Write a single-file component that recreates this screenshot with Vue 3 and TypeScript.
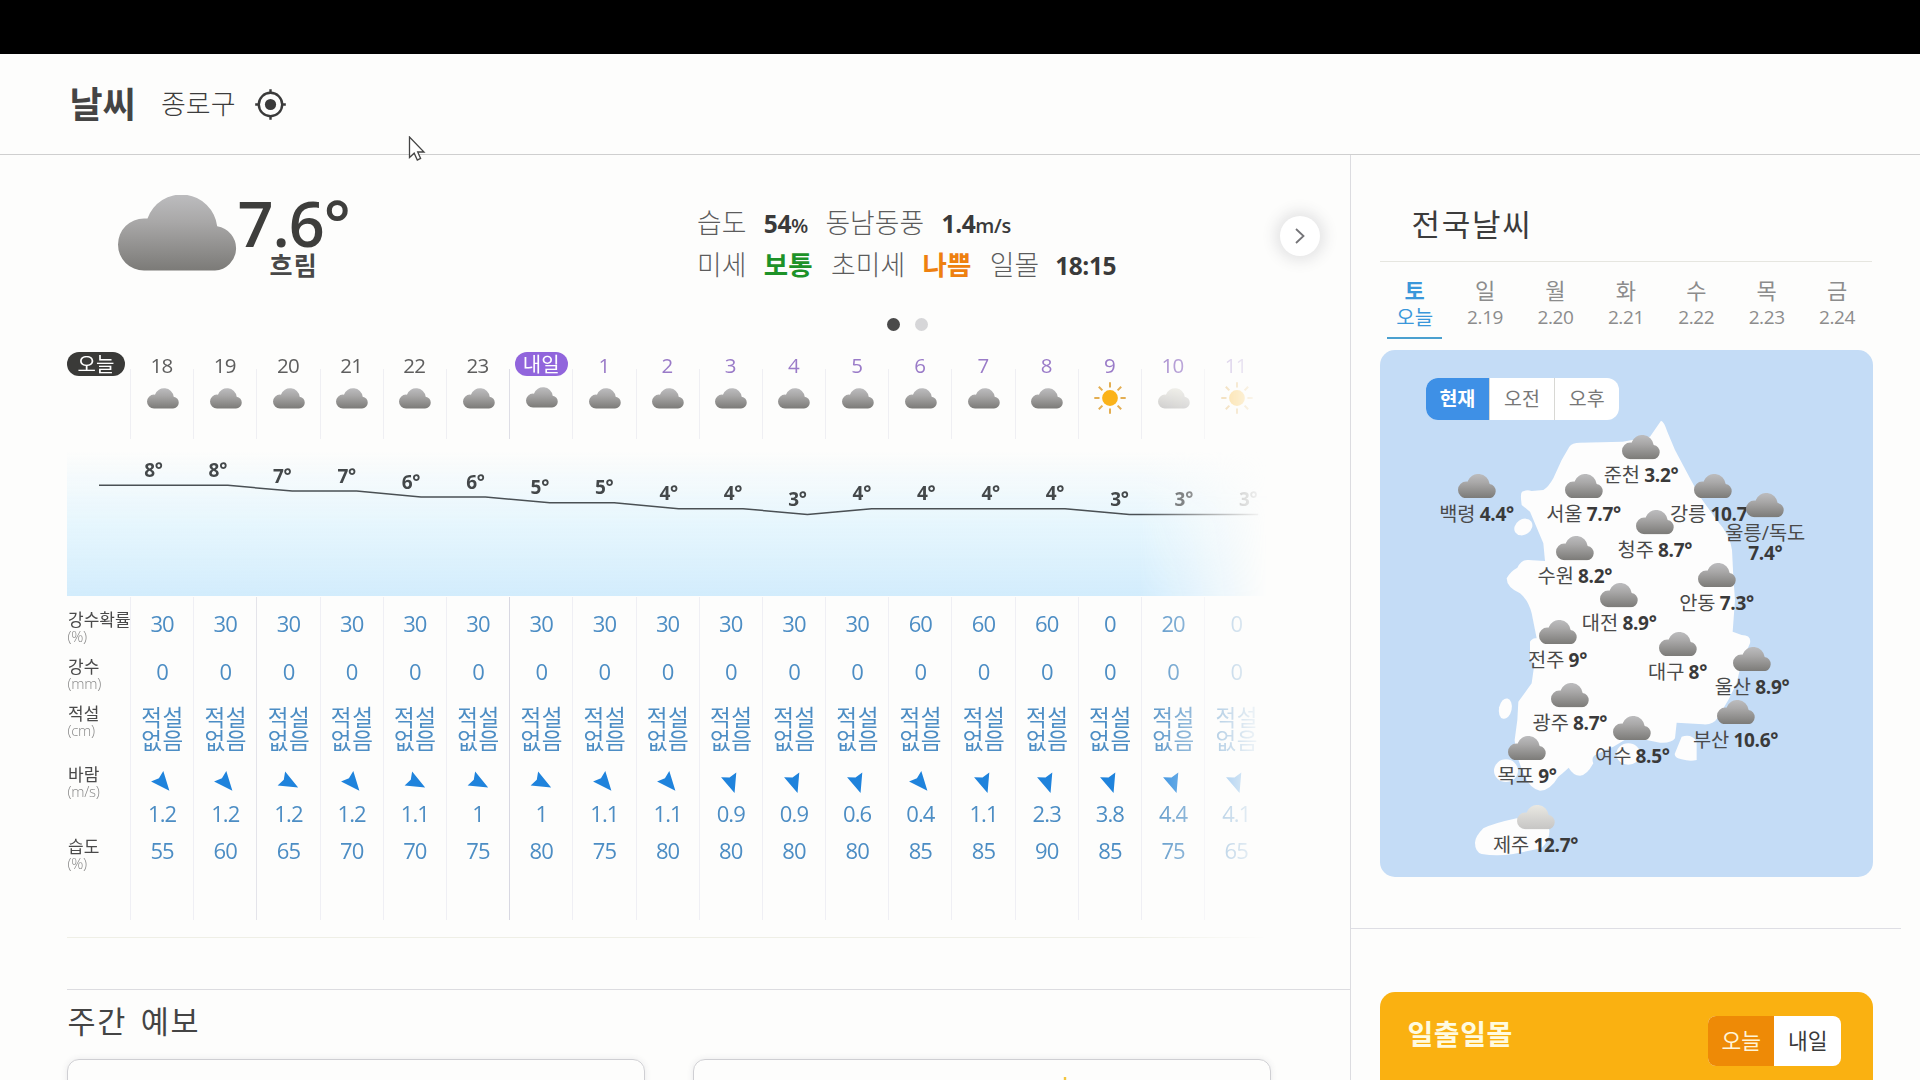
<script setup lang="ts">
interface Hour {
  label: string
  tomorrow: boolean
  icon: 'cloud' | 'sun' | 'pale'
  temp: number
  pop: number
  dir: number
  wind: string
  humidity: number
}

const labels = ['18', '19', '20', '21', '22', '23', '내일', '1', '2', '3', '4', '5', '6', '7', '8', '9', '10', '11']
const temps = [8, 8, 7, 7, 6, 6, 5, 5, 4, 4, 3, 4, 4, 4, 4, 3, 3, 3]
const pops = [30, 30, 30, 30, 30, 30, 30, 30, 30, 30, 30, 30, 60, 60, 60, 0, 20, 0]
const dirs = [40, 40, 62, 40, 62, 62, 62, 40, 40, 18, 18, 18, 40, 18, 18, 18, 18, 18]
const winds = ['1.2', '1.2', '1.2', '1.2', '1.1', '1', '1', '1.1', '1.1', '0.9', '0.9', '0.6', '0.4', '1.1', '2.3', '3.8', '4.4', '4.1']
const humidities = [55, 60, 65, 70, 70, 75, 80, 75, 80, 80, 80, 80, 85, 85, 90, 85, 75, 65]

const hours: Hour[] = labels.map((label, i) => ({
  label,
  tomorrow: i > 6,
  icon: i === 15 || i === 17 ? 'sun' : i === 16 ? 'pale' : 'cloud',
  temp: temps[i],
  pop: pops[i],
  dir: dirs[i],
  wind: winds[i],
  humidity: humidities[i],
}))

const step = 64.4
const tempY = (t: number): number => 35.3 + (8 - t) * 5.85
const points = [{ x: 32, y: tempY(8) }, ...temps.map((t, i) => ({ x: 96.4 + i * step, y: tempY(t) }))]
const line = points.map((p, i) => `${i ? 'L' : 'M'}${p.x.toFixed(1)} ${p.y.toFixed(1)}`).join(' ')

const rowLabels = [
  { name: '강수확률', unit: '(%)', height: 48, pad: 11 },
  { name: '강수', unit: '(mm)', height: 48, pad: 10.5 },
  { name: '적설', unit: '(cm)', height: 66, pad: 9 },
  { name: '바람', unit: '(m/s)', height: 63, pad: 4 },
  { name: '습도', unit: '(%)', height: 53, pad: 13 },
]

const days = [
  { day: '토', date: '오늘' },
  { day: '일', date: '2.19' },
  { day: '월', date: '2.20' },
  { day: '화', date: '2.21' },
  { day: '수', date: '2.22' },
  { day: '목', date: '2.23' },
  { day: '금', date: '2.24' },
]

const cities = [
  { name: '백령', temp: '4.4°', x: 97, y: 86 },
  { name: '서울', temp: '7.7°', x: 204, y: 86 },
  { name: '준천', temp: '3.2°', x: 261.5, y: 47.5 },
  { name: '수원', temp: '8.2°', x: 195.3, y: 148.5 },
  { name: '청주', temp: '8.7°', x: 275.3, y: 122.5 },
  { name: '강릉', temp: '10.7°', x: 333, y: 86 },
  { name: '울릉/독도', temp: '7.4°', x: 385.8, y: 105.7 },
  { name: '안동', temp: '7.3°', x: 337, y: 175 },
  { name: '대전', temp: '8.9°', x: 239.7, y: 195.7 },
  { name: '전주', temp: '9°', x: 178, y: 232.3 },
  { name: '대구', temp: '8°', x: 298, y: 244 },
  { name: '울산', temp: '8.9°', x: 372.5, y: 259 },
  { name: '광주', temp: '8.7°', x: 190.3, y: 295.5 },
  { name: '여수', temp: '8.5°', x: 252.8, y: 328.3 },
  { name: '부산', temp: '10.6°', x: 356, y: 312 },
  { name: '목포', temp: '9°', x: 147.6, y: 348.3 },
  { name: '제주', temp: '12.7°', x: 156, y: 417.7, pale: true },
]
</script>

<template>
  <div class="page">
    <svg class="defs" width="0" height="0">
      <defs>
        <linearGradient id="cloudFill" x1="0" y1="0" x2="0" y2="76" gradientUnits="userSpaceOnUse">
          <stop offset="0" stop-color="#bcbcbe" />
          <stop offset="0.35" stop-color="#a9a8a8" />
          <stop offset="1" stop-color="#7b7a77" />
        </linearGradient>
        <linearGradient id="paleFill" x1="0" y1="0" x2="0" y2="76" gradientUnits="userSpaceOnUse">
          <stop offset="0" stop-color="#e9e8e2" />
          <stop offset="1" stop-color="#c6c5c4" />
        </linearGradient>
        <path id="cloudShape" d="M26 75.5A26 26 0 0 1 26 23.5L29.5 23.6A36 36 0 0 1 99.2 31.2A22.3 22.3 0 0 1 97 75.5Z" />
        <symbol id="cloud" viewBox="0 0 119 76"><use href="#cloudShape" fill="url(#cloudFill)" /></symbol>
        <symbol id="pale" viewBox="0 0 119 76"><use href="#cloudShape" fill="url(#paleFill)" /></symbol>
        <symbol id="sun" viewBox="-16 -16 32 32">
          <circle r="7.9" fill="#fbb31a" />
          <path
            d="M0-15.7V-10.5M0 15.7V10.5M-15.7 0H-10.5M15.7 0H10.5M-11.2-11.2L-7.6-7.6M11.2 11.2L7.6 7.6M-11.2 11.2L-7.6 7.6M11.2-11.2L7.6-7.6"
            stroke="#e3ae52"
            stroke-width="2"
            fill="none"
          />
        </symbol>
      </defs>
    </svg>

    <div class="topbar"></div>
    <header class="header">
      <h1>날씨</h1>
      <span class="place">종로구</span>
      <svg class="locate" viewBox="-15.5 -15.5 31 31" fill="none" stroke="#3a3a3a" stroke-width="2.4">
        <circle r="11.7" />
        <circle r="5.6" fill="#3a3a3a" stroke="none" />
        <path d="M0-15.3V-11M0 15.3V11M-15.3 0H-11M15.3 0H11" />
      </svg>
    </header>

    <div class="body">
      <main class="main">
        <section class="current">
          <div class="now">
            <svg class="bigcloud"><use href="#cloud" /></svg>
            <div class="nowtext">
              <div class="degree">7.6°</div>
              <div class="state">흐림</div>
            </div>
          </div>
          <div class="info">
            <div class="inforow">
              <span>습도</span><b>54<small>%</small></b>
              <span>동남동풍</span><b>1.4<small>m/s</small></b>
            </div>
            <div class="inforow">
              <span>미세</span><b class="good">보통</b>
              <span>초미세</span><b class="bad">나쁨</b>
              <span class="last">일몰</span><b>18:15</b>
            </div>
          </div>
          <button class="next" aria-label="다음">
            <svg width="12" height="18" viewBox="0 0 12 18" fill="none" stroke="#747478" stroke-width="1.8"><path d="M2 2L9.5 9L2 16" /></svg>
          </button>
        </section>
        <div class="dots"><i class="on"></i><i></i></div>

        <section class="hourly">
          <div class="hours">
            <div class="first"><span class="pill dark">오늘</span></div>
            <div v-for="(h, i) in hours" :key="i" class="hour" :class="{ strong: i === 6 }">
              <div class="time" :class="{ violet: h.tomorrow }">
                <span v-if="i === 6" class="pill purple">내일</span>
                <template v-else>{{ h.label }}</template>
              </div>
              <svg class="wicon" :class="h.icon"><use :href="'#' + h.icon" /></svg>
            </div>
          </div>

          <svg class="chart" width="1206" height="147" viewBox="0 0 1206 147">
            <defs>
              <linearGradient id="sky" x1="0" y1="0" x2="0" y2="1">
                <stop offset="0" stop-color="#e4f5fe" stop-opacity="0" />
                <stop offset="0.5" stop-color="#e0f4fd" stop-opacity="0.8" />
                <stop offset="1" stop-color="#d2ecfc" />
              </linearGradient>
            </defs>
            <rect width="1206" height="146" fill="url(#sky)" />
            <path :d="line" fill="none" stroke="#4a5054" stroke-width="1.5" stroke-linejoin="round" />
            <text v-for="(h, i) in hours" :key="i" :x="77.2 + i * step" :y="tempY(h.temp) - 8.4">{{ h.temp }}°</text>
          </svg>

          <div class="table">
            <div class="names">
              <div v-for="(r, i) in rowLabels" :key="i" class="name" :style="{ height: r.height + 'px', paddingTop: r.pad + 'px' }">
                <div class="nm">{{ r.name }}</div>
                <div class="unit">{{ r.unit }}</div>
              </div>
            </div>
            <div v-for="(h, i) in hours" :key="i" class="col" :class="{ strong: i === 6, mid: i === 2 }">
              <div class="cell pop">{{ h.pop }}</div>
              <div class="cell rain">0</div>
              <div class="cell snow">적설<br />없음</div>
              <div class="cell arrow">
                <svg width="24" height="24" viewBox="-12 -12 24 24">
                  <path d="M0 11.5L-8-7.5L0-4.8L8-7.5Z" fill="#1f83dc" :transform="`rotate(${-h.dir})`" />
                </svg>
              </div>
              <div class="cell wind">{{ h.wind }}</div>
              <div class="cell hum">{{ h.humidity }}</div>
            </div>
          </div>
        </section>

        <section class="weekly">
          <h2>주간 예보</h2>
          <div class="cards">
            <div class="card"></div>
            <div class="card"><svg width="8" height="8" viewBox="0 0 8 8"><path d="M4 0V8" stroke="#f3c53f" stroke-width="2.4" /></svg></div>
          </div>
        </section>
      </main>

      <aside class="side">
        <h2>전국날씨</h2>
        <nav class="days">
          <div v-for="(d, i) in days" :key="i" class="day" :class="{ active: i === 0 }">
            <div class="dn">{{ d.day }}</div>
            <div class="dd">{{ d.date }}</div>
          </div>
        </nav>
        <div class="map">
          <div class="toggle"><span class="sel">현재</span><span>오전</span><span>오후</span></div>
          <div class="canvas">
            <svg class="land" width="493" height="476" viewBox="0 0 1479 1428" fill="#fdfdfd">
              <path
                d="M843 62Q852 64 862 95L885 150L930 235L960 290L1010 360Q1050 405 1056 450L1060 530L1065 600L1058 695L1085 705Q1115 705 1110 730L1084 790L1070 850L1045 900L1012 955Q1000 975 970 973L890 968L885 1015Q875 1030 840 1028L800 1020L750 1010L700 1040L650 1063Q632 1070 640 1090Q620 1127 600 1127Q580 1127 566 1103Q548 1120 535 1130Q510 1172 480 1172Q448 1165 430 1120L408 1060L404 1020L412 960L415 905L455 850L462 800L450 775L450 725Q458 712 470 715L455 640Q445 600 420 580Q380 562 380 535Q390 515 412 503Q425 478 445 480L495 483L490 430L450 335L425 315Q420 280 426 275Q440 268 455 273L490 270Q505 262 520 235L545 180L568 140Q576 128 600 128L728 125L810 110Z"
              />
              <ellipse cx="430" cy="381" rx="29" ry="23" transform="rotate(-35 430 381)" />
              <ellipse cx="376" cy="926" rx="19" ry="31" transform="rotate(12 376 926)" />
              <ellipse cx="378" cy="1112" rx="36" ry="34" />
              <ellipse cx="745" cy="1062" rx="36" ry="32" />
              <path d="M905 1010Q935 1000 950 1025L950 1080Q930 1085 905 1078Q885 1075 884 1062Z" />
              <path d="M410 1255Q340 1270 310 1285Q285 1310 285 1328Q285 1355 305 1362Q350 1370 400 1362L485 1345Q510 1320 508 1290Q500 1265 480 1262Z" />
            </svg>
            <div v-for="c in cities" :key="c.name" class="city" :style="{ left: c.x + 'px', top: c.y + 'px' }">
              <svg class="ccloud"><use :href="c.pale ? '#pale' : '#cloud'" /></svg>
              <div class="cl" :class="{ two: c.name.length > 2 }"><span>{{ c.name }}</span> <b>{{ c.temp }}</b></div>
            </div>
          </div>
        </div>
        <div class="sunbox">
          <div class="sunset">
            <h3>일출일몰</h3>
            <div class="switch"><span class="sel">오늘</span><span>내일</span></div>
          </div>
        </div>
      </aside>
    </div>

    <svg class="cursor" width="18" height="26" viewBox="0 0 18 26">
      <path d="M1.5 1V21.5L6.2 17.2L9.3 24L12.6 22.4L9.7 16H16Z" fill="#fff" stroke="#444" stroke-width="1.3" />
    </svg>
  </div>
</template>

<style>
body {
  background: #fdfdfc;
  overflow: hidden;
}
</style>

<style scoped>
.page {
  width: 1920px;
  height: 1080px;
  overflow: hidden;
  position: relative;
  background: #fdfdfc;
  color: #3c3c3c;
  font-family: "Open Sans", "Noto Sans CJK KR", sans-serif;
}
.page * {
  box-sizing: border-box;
}
.defs {
  position: absolute;
}
h1,
h2,
h3 {
  margin: 0;
}
.topbar {
  height: 54px;
  background: #000;
}
.header {
  height: 101px;
  display: flex;
  align-items: center;
  padding-left: 69.5px;
  border-bottom: 1px solid #cfcfcf;
}
h1 {
  font-size: 36px;
  line-height: 40px;
  font-weight: 700;
  width: 91.5px;
  padding-top: 1px;
  color: #444;
}
.place {
  font-size: 27px;
  line-height: 32px;
  font-weight: 300;
  width: 94px;
  color: #3c3c3c;
}
.locate {
  width: 31px;
  height: 31px;
}
.body {
  display: flex;
  height: 925px;
}
.main {
  width: 1351px;
  flex: none;
  padding-left: 67px;
  border-right: 1px solid #dcdce0;
}
.current {
  height: 163px;
  display: flex;
}
.now {
  width: 630px;
  display: flex;
  padding-left: 51px;
}
.bigcloud {
  width: 119px;
  height: 76px;
  margin-top: 40px;
}
.nowtext {
  padding: 36px 0 0 0.5px;
}
.degree {
  font-size: 63px;
  line-height: 64px;
  font-weight: 600;
  letter-spacing: -1px;
  color: #3e3e3c;
}
.state {
  margin: -4px 0 0 32px;
  font-size: 25px;
  line-height: 28px;
  font-weight: 700;
  letter-spacing: 1.2px;
  color: #484848;
}
.info {
  width: 582.5px;
  padding-top: 47px;
}
.inforow {
  display: flex;
  align-items: baseline;
  height: 41.5px;
  line-height: 41px;
}
.inforow span {
  font-size: 26.8px;
  font-weight: 300;
  color: #5c5c5c;
  margin-right: 17.5px;
}
.inforow .last {
  margin-right: 16px;
}
.inforow b {
  font-size: 24.5px;
  font-weight: 700;
  letter-spacing: -0.4px;
  color: #3a3a3a;
  margin-right: 17.5px;
}
.inforow b small {
  font-size: 20px;
  font-weight: 600;
  margin-left: 0;
}
.inforow b.good,
.inforow b.bad {
  font-size: 26.5px;
  letter-spacing: 0;
  color: #1d9228;
  margin-right: 18.5px;
}
.inforow b.bad {
  color: #ee800f;
}
.next {
  width: 40px;
  height: 40px;
  margin-top: 61px;
  padding: 0;
  border: 0;
  border-radius: 50%;
  background: #fff;
  box-shadow: 0 0 14px 5px rgba(60, 60, 80, 0.13);
  display: flex;
  align-items: center;
  justify-content: center;
}
.dots {
  display: flex;
  gap: 15px;
  height: 22px;
  padding-left: 820px;
}
.dots i {
  width: 13px;
  height: 13px;
  border-radius: 50%;
  background: #d6d6d8;
}
.dots .on {
  background: #4a4a4a;
}
.hourly {
  width: 1206px;
  height: 598px;
  border-bottom: 1px solid #efefe6;
  -webkit-mask-image: linear-gradient(to right, #000 1073px, transparent 1200px);
  mask-image: linear-gradient(to right, #000 1073px, transparent 1200px);
}
.hours {
  display: flex;
  height: 110px;
}
.first,
.names {
  width: 63px;
  flex: none;
}
.first {
  padding-top: 12px;
}
.pill {
  display: block;
  border-radius: 13px;
  height: 24px;
  line-height: 26px;
  text-align: center;
  color: #fff;
  font-size: 20px;
  font-weight: 400;
}
.dark {
  width: 58px;
  background: #3a3a38;
}
.purple {
  width: 53px;
  margin: 1px 0 0 1px;
  background: #9165dc;
}
.hour {
  width: 63.2px;
  flex: none;
  padding-top: 11px;
  display: flex;
  flex-direction: column;
  align-items: center;
  background: linear-gradient(#efeff3, #efeff3) 0 29px / 1px 70px no-repeat;
}
.hour.strong {
  background-image: linear-gradient(#dedee6, #dedee6);
}
.time {
  height: 30px;
  line-height: 28.5px;
  font-size: 20.5px;
  letter-spacing: -0.7px;
  color: #5e5e5e;
}
.time .pill {
  letter-spacing: 0;
  line-height: 25px;
}
.violet {
  color: #9a7bc8;
}
.wicon {
  width: 32px;
  height: 21px;
  margin: 6.5px 0 0 2px;
}
.wicon.sun {
  height: 32px;
  margin-top: 1px;
}
.strong .wicon {
  margin-top: 5.5px;
}
.chart {
  display: block;
}
.chart text {
  font-size: 19px;
  font-weight: 700;
  letter-spacing: -0.3px;
  fill: #44484a;
}
.table {
  display: flex;
  height: 323px;
}
.names {
  padding-top: 2.5px;
}
.name {
  white-space: nowrap;
}
.nm {
  font-size: 17px;
  line-height: 18px;
  padding-left: 1px;
  color: #4a4a4a;
}
.unit {
  font-size: 15px;
  line-height: 15px;
  font-weight: 300;
  letter-spacing: -0.3px;
  padding-left: 0.5px;
  color: #888;
}
.col {
  width: 63.2px;
  flex: none;
  padding-top: 3px;
  border-left: 1px solid #efeff4;
}
.col.mid {
  border-color: #e4e4ea;
}
.col.strong {
  border-color: #d8d8e2;
}
.cell {
  text-align: center;
  color: #4c8dc4;
  font-size: 22px;
  letter-spacing: -0.9px;
}
.pop,
.rain {
  height: 48px;
  line-height: 47px;
}
.snow {
  height: 66px;
  padding: 9.5px 0 0 1px;
  font-size: 22.5px;
  line-height: 23px;
  letter-spacing: 0.6px;
  white-space: nowrap;
  font-weight: 400;
}
.arrow {
  height: 41px;
  padding-top: 8px;
}
.arrow svg {
  display: block;
  margin: 0 auto;
}
.wind {
  height: 22px;
  line-height: 20px;
}
.hum {
  height: 53px;
  line-height: 51px;
}
.weekly {
  margin-top: 51px;
  border-top: 1px solid #dcdce0;
}
.weekly h2 {
  font-size: 30.5px;
  line-height: 36px;
  font-weight: 400;
  letter-spacing: 1.7px;
  word-spacing: 4px;
  margin-top: 13px;
  padding-left: 0.5px;
  color: #444;
}
.cards {
  display: flex;
  gap: 47.5px;
  margin-top: 19.5px;
}
.card {
  width: 578px;
  height: 60px;
  border: 1px solid #cfcfd3;
  border-radius: 12px;
  box-shadow: 0 0 6px rgba(60, 60, 80, 0.1);
  padding: 17px 0 0 367px;
}
.card svg {
  display: block;
}
.side {
  width: 569px;
}
.side h2 {
  font-size: 31px;
  line-height: 40px;
  font-weight: 400;
  letter-spacing: 1.7px;
  padding: 49px 0 17px 32px;
  margin: 0 48px 0 28.5px;
  border-bottom: 1px solid #e6e6e0;
  color: #3c3c3c;
}
.days {
  display: flex;
  height: 88px;
  padding: 12px 0 0 28.5px;
}
.day {
  width: 70.4px;
  text-align: center;
  color: #8c8c8c;
}
.dn {
  font-size: 22px;
  line-height: 32px;
}
.dd {
  font-size: 19px;
  line-height: 23px;
  letter-spacing: -0.4px;
}
.active {
  color: #3a97da;
}
.active .dn {
  font-weight: 700;
}
.active .dd {
  font-size: 20px;
  width: 55px;
  height: 33px;
  margin: 0 auto;
  letter-spacing: 0;
  border-bottom: 2px solid #4aa0cf;
}
.map {
  margin-left: 28.5px;
  width: 493px;
  height: 527px;
  border-radius: 15px;
  background: #c4dcf6;
  padding-top: 28px;
  overflow: hidden;
}
.toggle {
  display: flex;
  width: 193px;
  height: 42px;
  margin-left: 46px;
  border-radius: 12px;
  overflow: hidden;
  background: #fff;
}
.toggle span {
  flex: 1;
  text-align: center;
  line-height: 42px;
  font-size: 19.5px;
  color: #777;
  border-left: 1px solid #d8d8d4;
}
.toggle .sel {
  background: #3e90e6;
  color: #fff;
  font-weight: 700;
  border: 0;
}
.canvas {
  position: relative;
  height: 476px;
  margin-top: -20px;
}
.land {
  display: block;
}
.city {
  position: absolute;
  width: 120px;
  margin-left: -60px;
  margin-top: -12.5px;
  text-align: center;
}
.ccloud {
  display: block;
  width: 38px;
  height: 24.5px;
  margin: 0 auto;
}
.cl {
  margin: 4.5px 0 0;
  font-size: 19.8px;
  line-height: 22px;
  white-space: nowrap;
  word-spacing: -1px;
  color: #4a4a4a;
}
.cl b {
  font-size: 19px;
  font-weight: 700;
  letter-spacing: -0.3px;
  color: #3a3a3a;
}
.two {
  white-space: normal;
  line-height: 20px;
  padding-top: 1px;
}
.two b {
  display: block;
}
.sunbox {
  margin: 51px 19px 0 0;
  border-top: 1px solid #dedee4;
  padding: 63px 0 0 28.5px;
}
.sunset {
  width: 493px;
  height: 120px;
  border-radius: 15px;
  background: #fab111;
  display: flex;
  justify-content: space-between;
  padding: 24px 32px 0 28px;
}
.sunset h3 {
  font-size: 28px;
  line-height: 36px;
  letter-spacing: 0.6px;
  color: #fffbe0;
}
.switch {
  display: flex;
  width: 133px;
  height: 50px;
  border-radius: 8px;
  overflow: hidden;
  background: #fff;
}
.switch span {
  flex: 1;
  text-align: center;
  line-height: 50px;
  font-size: 21.5px;
  padding-left: 1px;
  color: #3a3a3a;
}
.switch .sel {
  background: #ee8a06;
  color: #fff5d8;
}
.cursor {
  position: absolute;
  left: 408px;
  top: 135.5px;
}
</style>
